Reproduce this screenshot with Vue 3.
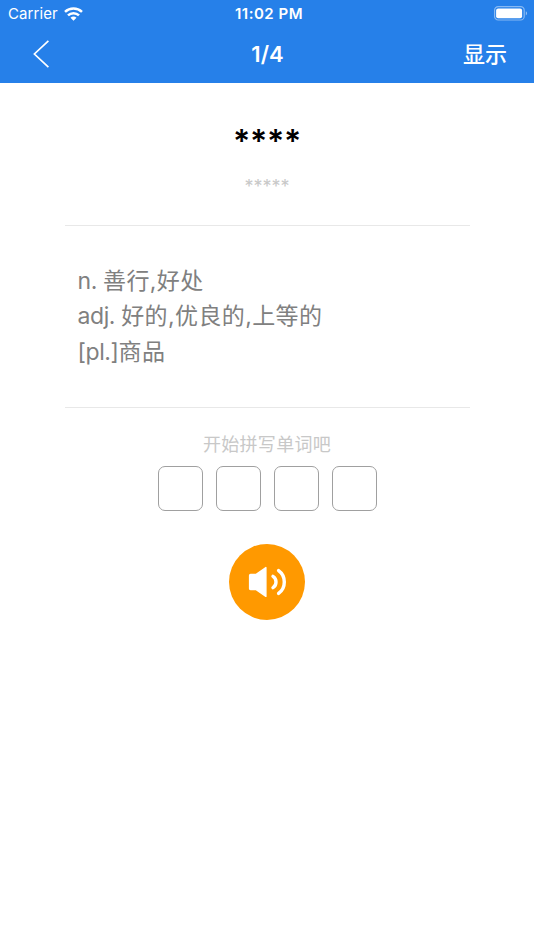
<template>
  <div class="page">
    <header class="header">
      <div class="status-bar">
        <div class="status-left">
          <span>Carrier</span>
          <svg class="wifi" width="19" height="14" viewBox="0 0 19 14" fill="none" stroke="#fff" stroke-width="2.5">
            <path d="M1 4.9C5.8.5 13.2.5 18 4.9" />
            <path d="M4 8.3C7 5.4 12 5.4 15 8.3" />
            <path d="M6.5 10.7C8.2 9.1 10.8 9.1 12.5 10.7L9.5 13.7Z" fill="#fff" stroke="none" />
          </svg>
        </div>
        <span class="status-time">11:02 PM</span>
        <div class="status-right">
          <svg width="34" height="16" viewBox="0 0 34 16">
            <rect x="0.6" y="0.6" width="29.6" height="13.4" rx="3.6" fill="none" stroke="#fff" stroke-opacity="0.45" stroke-width="1.2" />
            <rect x="2.1" y="2.4" width="26" height="9.8" rx="2" fill="#fff" />
            <path d="M31.8 5.2C33.5 5.8 33.5 8.8 31.8 9.4Z" fill="#fff" fill-opacity="0.5" />
          </svg>
        </div>
      </div>
      <div class="nav-bar">
        <div class="nav-back">
          <svg width="18" height="30" viewBox="0 0 18 30" fill="none" stroke="#fff" stroke-width="1.7">
            <path d="M16.4 1.8L2.4 15L16.4 28.2" />
          </svg>
        </div>
        <div class="nav-title">{{ current }}/{{ total }}</div>
        <div class="nav-action">显示</div>
      </div>
    </header>

    <main class="content">
      <div class="word">{{ maskedWord }}</div>
      <div class="phonetic">*****</div>
      <div class="meaning">
        <div v-for="item in meanings" :key="item.text">
          <span class="pos">{{ item.pos }}</span>{{ item.text }}
        </div>
      </div>
      <div class="hint">开始拼写单词吧</div>
      <div class="letters">
        <div v-for="n in wordLength" :key="n" class="letter"></div>
      </div>
      <div class="speaker">
        <svg width="40" height="32" viewBox="0 0 40 32">
          <path
            d="M3.6 8.4H9.2L18.9 1.6V30.4L9.2 23.6H3.6Q2.6 23.6 2.6 22.6V9.4Q2.6 8.4 3.6 8.4Z"
            fill="#fff"
            stroke="#fff"
            stroke-width="1.4"
            stroke-linejoin="round"
          />
          <g fill="none" stroke="#fff" stroke-width="3.4" stroke-linecap="round">
            <path d="M26 10.4C30 12.8 30 19.2 26 21.6" />
            <path d="M31.6 4.6C39.2 10 39.2 22 31.6 27.4" />
          </g>
        </svg>
      </div>
    </main>
  </div>
</template>

<script setup>
import { ref, computed } from 'vue'

const current = ref(1)
const total = ref(4)
const wordLength = ref(4)
const meanings = ref([
  { pos: 'n. ', text: '善行,好处' },
  { pos: 'adj. ', text: '好的,优良的,上等的' },
  { pos: '[pl.]', text: '商品' }
])

const maskedWord = computed(() => '*'.repeat(wordLength.value))
</script>

<style>
body {
  margin: 0;
  background: #fff;
}
</style>

<style scoped>
.page {
  height: 950px;
  overflow: hidden;
  background: #fff;
  font-family: Inter, "Noto Sans CJK SC", sans-serif;
}

.header {
  height: 83px;
  background: #2680e9;
  color: #fff;
}

.status-bar {
  display: grid;
  grid-template-columns: 1fr auto 1fr;
  align-items: center;
  height: 28px;
  padding: 0 6px 0 8px;
  font-size: 15px;
  line-height: 28px;
}

.status-left {
  display: flex;
  align-items: center;
  gap: 6px;
  letter-spacing: 0.1px;
}

.status-time {
  font-weight: 600;
  letter-spacing: 0.5px;
  padding-left: 2px;
}

.status-right {
  display: flex;
  justify-content: flex-end;
}

.nav-bar {
  display: grid;
  grid-template-columns: 1fr auto 1fr;
  align-items: center;
  height: 51px;
  padding: 0 27px 0 32px;
}

.nav-back {
  display: flex;
}

.nav-title {
  font-size: 22px;
  font-weight: 600;
  line-height: 30px;
  padding-right: 4px;
}

.nav-action {
  font-size: 22px;
  font-weight: 500;
  line-height: 32px;
  padding-top: 1px;
  text-align: right;
}

.content {
  display: flex;
  flex-direction: column;
  align-items: center;
}

.word {
  margin-top: 36px;
  height: 44px;
  line-height: 46px;
  font-size: 32px;
  font-weight: 600;
  letter-spacing: -0.3px;
  color: #000;
}

.phonetic {
  margin-top: 11px;
  height: 24px;
  line-height: 25px;
  font-size: 18px;
  color: #c8c8c8;
}

.meaning {
  box-sizing: border-box;
  width: 405px;
  height: 183px;
  margin-top: 27px;
  padding: 38px 13px 0;
  border-top: 1px solid #e8e8e8;
  border-bottom: 1px solid #e8e8e8;
  font-size: 23px;
  line-height: 35.3px;
  letter-spacing: 0.4px;
  color: #808080;
}

.pos {
  letter-spacing: -0.4px;
  white-space: pre;
}

.hint {
  margin-top: 22px;
  height: 28px;
  line-height: 29px;
  font-size: 18px;
  letter-spacing: 0.3px;
  color: #c8c8c8;
}

.letters {
  display: flex;
  gap: 13px;
  margin-top: 8px;
}

.letter {
  box-sizing: border-box;
  width: 45px;
  height: 45px;
  border: 1px solid #a0a0a0;
  border-radius: 7px;
}

.speaker {
  display: flex;
  align-items: center;
  justify-content: center;
  width: 76.5px;
  height: 76.5px;
  margin-top: 32.5px;
  border-radius: 50%;
  background: #ff9900;
}
</style>
